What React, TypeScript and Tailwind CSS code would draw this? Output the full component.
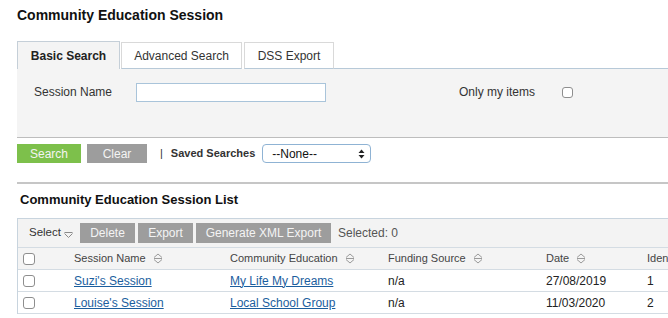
import React from 'react';

const font = { fontFamily: '"Liberation Sans", Arial, Helvetica, sans-serif' };

function SortIcon() {
  return (
    <svg width="10" height="11" viewBox="0 0 10 11" className="ml-[7px] shrink-0">
      <path d="M1 4.5 L5 1 L9 4.5" fill="none" stroke="#9a9a9a" strokeWidth="1" />
      <path d="M1 5.5 H9" stroke="#9a9a9a" strokeWidth="1" />
      <path d="M1 6.5 L5 10 L9 6.5" fill="none" stroke="#9a9a9a" strokeWidth="1" />
    </svg>
  );
}

function Check() {
  return <span className="inline-block w-[12px] h-[12px] rounded-[3px] border border-[#8e8e8e] bg-white" />;
}

const cols = 'grid grid-cols-[48px_156px_158px_158px_101px_120px]';

const rows = [
  { name: "Suzi's Session", edu: 'My Life My Dreams', fund: 'n/a', date: '27/08/2019', id: '1' },
  { name: "Louise's Session", edu: 'Local School Group', fund: 'n/a', date: '11/03/2020', id: '2' },
];

export default function App() {
  return (
    <div className="w-[668px] h-[318px] overflow-hidden bg-white text-[#333]" style={font}>
      <div className="w-[760px] pl-[17px]">
        {/* Title */}
        <div className="pt-[6px] h-[24px] text-[14px] leading-[18px] font-bold text-[#111]">
          Community Education Session
        </div>

        {/* Tabs */}
        <div className="mt-[17px] flex items-end h-[28px] text-[12px]">
          <div className="h-[28px] w-[103px] flex items-center justify-center bg-[#f4f4f4] border border-b-0 border-[#c5cfd8] font-bold text-[#222]">
            Basic Search
          </div>
          <div className="ml-[1px] h-[27px] w-[121px] flex items-center justify-center bg-white border border-[#d9d9d9] border-b-[#b7c9d8] text-[#333]">
            Advanced Search
          </div>
          <div className="ml-[2px] h-[27px] w-[90px] flex items-center justify-center bg-white border border-[#d9d9d9] border-b-[#b7c9d8] text-[#333]">
            DSS Export
          </div>
          <div className="flex-1 border-b border-[#b7c9d8]" />
        </div>

        {/* Search panel */}
        <div className="h-[69px] bg-[#f4f4f4] border-b border-[#bdbdbd] flex items-start pt-[14px] text-[12px]">
          <div className="w-[119px] pl-[17px] leading-[19px]">Session Name</div>
          <div className="w-[190px] h-[19px] bg-white border border-[#a9c4da]" />
          <div className="ml-[133px] w-[103px] leading-[19px]">Only my items</div>
          <div className="pt-[2px]">
            <span className="inline-block w-[11px] h-[11px] rounded-[3px] border border-[#8e8e8e] bg-white" />
          </div>
        </div>

        {/* Buttons */}
        <div className="mt-[6px] flex items-center h-[19px] text-[12px]">
          <div className="w-[64px] h-[19px] bg-[#7dc04b] text-[#f4f4f4] flex items-center justify-center">Search</div>
          <div className="ml-[6px] w-[60px] h-[19px] bg-[#9d9d9d] text-[#f4f4f4] flex items-center justify-center">Clear</div>
          <div className="ml-[13px] text-[#333] text-[11px]">|</div>
          <div className="ml-[8px] text-[11px] font-bold text-[#333]">Saved Searches</div>
          <div className="ml-[7px] w-[109px] h-[19px] rounded-[4px] border border-[#8fb3d4] bg-white flex items-center justify-between pl-[9px] pr-[5px] text-[12px] text-[#111]">
            <span>--None--</span>
            <svg width="7" height="10" viewBox="0 0 7 10">
              <path d="M0.5 4 L3.5 0.5 L6.5 4 Z" fill="#222" />
              <path d="M0.5 6 L3.5 9.5 L6.5 6 Z" fill="#222" />
            </svg>
          </div>
        </div>

        {/* Separator */}
        <div className="mt-[19px] h-[2px] bg-[#c6c6c6]" />

        {/* List title */}
        <div className="pl-[3px] mt-[8px] h-[16px] text-[13px] leading-[16px] font-bold text-[#111]">
          Community Education Session List
        </div>

        {/* Table */}
        <div className="mt-[10px] border-t border-l border-[#c8d4de]">
          <div className="h-[29px] bg-[#f3f3f3] border-b border-[#d4dce3] flex items-center text-[12px]">
            <div className="pl-[11px] flex items-center text-[11.5px] text-[#333]">
              Select
              <svg width="9" height="6" viewBox="0 0 9 6" className="ml-[3px] mt-[3px]">
                <path d="M0.5 0.5 H8.5 M0.5 1.5 L4.5 5.5 L8.5 1.5" fill="none" stroke="#8a8a8a" strokeWidth="1" />
              </svg>
            </div>
            <div className="ml-[7px] w-[55px] h-[20px] bg-[#9d9d9d] text-[#f4f4f4] flex items-center justify-center">Delete</div>
            <div className="ml-[3px] w-[55px] h-[20px] bg-[#9d9d9d] text-[#f4f4f4] flex items-center justify-center">Export</div>
            <div className="ml-[3px] w-[135px] h-[20px] bg-[#9d9d9d] text-[#f4f4f4] flex items-center justify-center">Generate XML Export</div>
            <div className="ml-[7px] text-[#555]">Selected: 0</div>
          </div>

          <div className={`${cols} h-[22px] bg-[#f4f4f4] border-b border-[#d4dce3] items-center text-[11px] text-[#444]`}>
            <div className="pl-[5px] flex items-center"><Check /></div>
            <div className="pl-2 flex items-center">Session Name<SortIcon /></div>
            <div className="pl-2 flex items-center whitespace-nowrap">Community Education<SortIcon /></div>
            <div className="pl-2 flex items-center">Funding Source<SortIcon /></div>
            <div className="pl-2 flex items-center">Date<SortIcon /></div>
            <div className="pl-2">Identifier</div>
          </div>

          {rows.map((r) => (
            <div key={r.id} className={`${cols} h-[22px] border-b border-[#d4dce3] items-center text-[12px] text-[#222]`}>
              <div className="pl-[5px] flex items-center"><Check /></div>
              <div className="pl-2"><a href="#" className="text-[#1b5e9e] underline">{r.name}</a></div>
              <div className="pl-2"><a href="#" className="text-[#1b5e9e] underline">{r.edu}</a></div>
              <div className="pl-2">{r.fund}</div>
              <div className="pl-2">{r.date}</div>
              <div className="pl-2">{r.id}</div>
            </div>
          ))}
        </div>
      </div>
    </div>
  );
}
